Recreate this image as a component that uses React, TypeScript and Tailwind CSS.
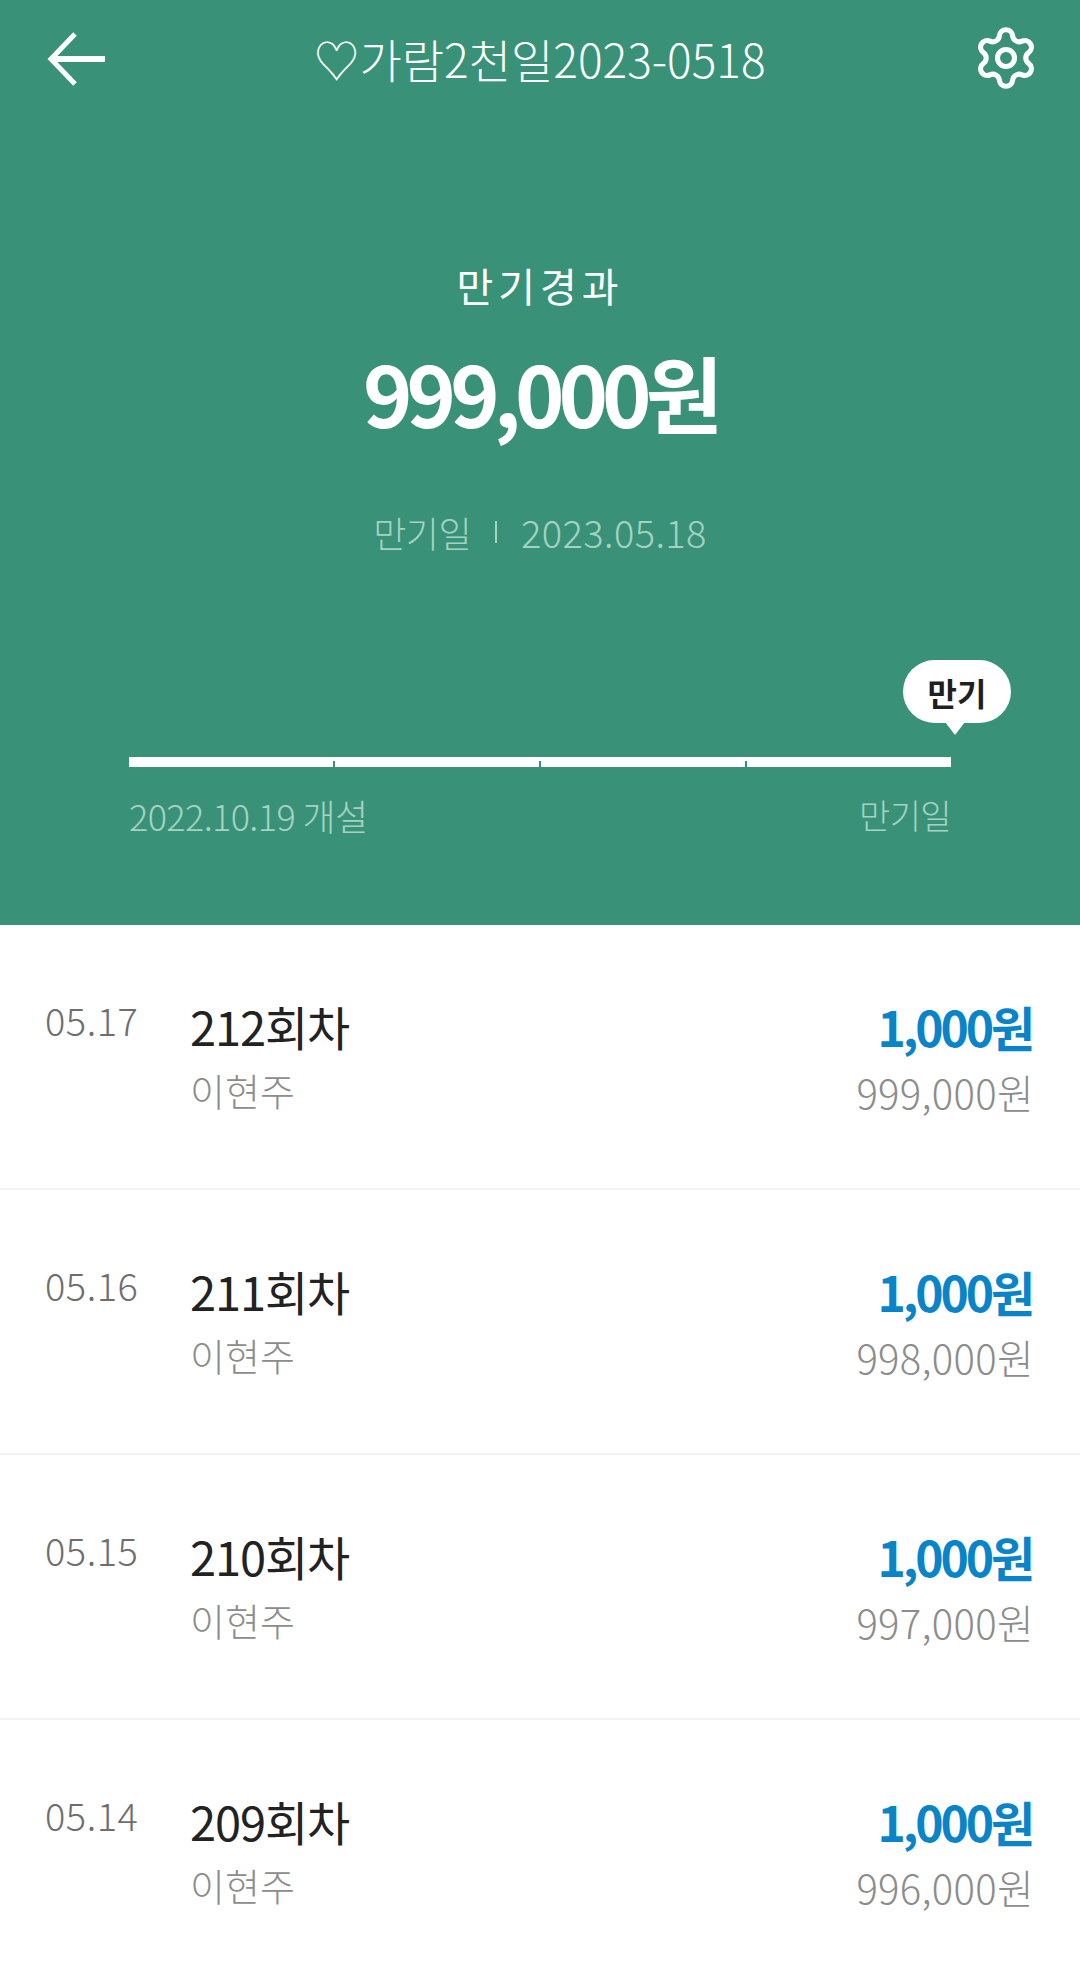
import { Settings } from 'lucide-react';

const rows = [
  { date: '05.17', round: '212회차', total: '999,000원' },
  { date: '05.16', round: '211회차', total: '998,000원' },
  { date: '05.15', round: '210회차', total: '997,000원' },
  { date: '05.14', round: '209회차', total: '996,000원' },
];

export default function App() {
  return (
    <div className="flex h-[1976px] w-[1080px] flex-col overflow-hidden bg-white font-['Noto_Sans_CJK_KR',sans-serif]">
      <section className="flex h-[925px] shrink-0 flex-col bg-[#399277] text-white">
        <header className="flex h-[118px] items-center justify-between pl-[47px] pr-[40px]">
          <svg viewBox="0 0 60 54" className="h-[54px] w-[60px]" fill="none" stroke="currentColor" strokeWidth="5">
            <path d="M58 27H5" strokeWidth="6" />
            <path d="M28 2L4 27L28 52" />
          </svg>
          <h1 className="-mt-[3px] text-[46px] font-light leading-none tracking-normal">♡가람2천일2023-0518</h1>
          <Settings className="-mt-[2px] h-[68px] w-[68px]" strokeWidth={1.8} />
        </header>

        <div className="mt-[142px] flex flex-col items-center">
          <p className="text-[40px] font-normal leading-[50px] tracking-[5px]">만기경과</p>
          <p className="mt-[32px] text-[84px] font-bold leading-[100px] tracking-[-6px]">999,000원</p>
          <div className="mt-[65px] flex items-center font-light leading-[50px] text-[#a5d2c2]">
            <span className="text-[36px] tracking-[-0.5px]">만기일</span>
            <span className="mx-[24px] h-[22px] w-[2px] bg-[#a5d2c2]" />
            <span className="text-[38px] tracking-[0.4px]">2023.05.18</span>
          </div>
        </div>

        <div className="relative mt-[200px] px-[129px]">
          <div className="absolute left-[903px] top-[-97px] flex h-[63px] w-[108px] items-center justify-center rounded-[32px] bg-white text-[32px] font-bold leading-none text-[#1f1f1f]">
            만기
            <span className="absolute left-[42px] top-[62px] h-0 w-0 border-x-[10px] border-t-[13px] border-x-transparent border-t-white" />
          </div>
          <div className="flex h-[10px] w-[822px] items-end justify-evenly bg-white">
            <span className="h-[6px] w-[2px] bg-[#399277]" />
            <span className="h-[6px] w-[2px] bg-[#399277]" />
            <span className="h-[6px] w-[2px] bg-[#399277]" />
          </div>
          <div className="mt-[25px] flex w-[822px] justify-between text-[36px] font-light leading-[46px] tracking-[-0.6px] text-[#a5d2c2]">
            <span>2022.10.19 개설</span>
            <span className="text-[34px]">만기일</span>
          </div>
        </div>
      </section>

      {rows.map((row) => (
        <div key={row.date} className="flex h-[265px] shrink-0 border-b-2 border-[#f2f2f2] pl-[45px] pr-[48px] pt-[71px]">
          <span className="w-[145px] text-[38px] font-light leading-[48px] tracking-[0.5px] text-[#6e6e6e]">{row.date}</span>
          <div className="flex-1">
            <p className="text-[47px] font-normal leading-[60px] tracking-[-1.1px] text-[#222222]">{row.round}</p>
            <p className="mt-[10px] text-[38px] font-light leading-[48px] text-[#8c8c8c]">이현주</p>
          </div>
          <div className="text-right">
            <p className="text-[48px] font-bold leading-[60px] tracking-[-3.1px] text-[#0a84c8]">1,000원</p>
            <p className="-mr-[2px] mt-[12px] text-[40px] font-light leading-[48px] tracking-[0.3px] text-[#8c8c8c]">{row.total}</p>
          </div>
        </div>
      ))}
    </div>
  );
}
